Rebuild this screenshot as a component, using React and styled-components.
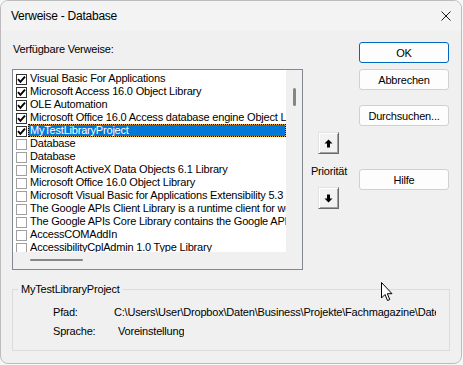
import React from 'react';
import styled, { createGlobalStyle } from 'styled-components';

const GlobalStyle = createGlobalStyle`
  html, body {
    margin: 0;
    padding: 0;
    background: #f7f7f7;
  }
  * {
    box-sizing: border-box;
  }
`;

const Window = styled.div`
  position: relative;
  width: 462px;
  height: 364px;
  border: 1px solid #bdbdbd;
  border-radius: 8px;
  background: #f0f0f0;
  overflow: hidden;
  font-family: "Liberation Sans", Arial, sans-serif;
  font-size: 11px;
  letter-spacing: -0.2px;
  color: #000;
`;

const TitleBar = styled.div`
  height: 30px;
  display: flex;
  align-items: center;
  justify-content: space-between;
  padding: 0 9px 0 10px;
  background: #f3f3f3;
  font-size: 12px;
  letter-spacing: -0.25px;
`;

const CloseIcon = styled.svg`
  width: 10px;
  height: 10px;
  margin-right: 1px;
`;

const Content = styled.div`
  padding: 11px 0 0 11px;
`;

const MainGrid = styled.div`
  display: grid;
  grid-template-columns: 291px 56px 90px;
`;

const LeftColumn = styled.div`
  display: flex;
  flex-direction: column;
`;

const Label = styled.div`
  height: 27px;
  padding-top: 1px;
  line-height: 13px;
  padding-left: 1px;
`;

const ListBox = styled.div`
  height: 201px;
  border: 1px solid #828790;
  background: #fff;
  display: grid;
  grid-template-columns: 1fr 16px;
  grid-template-rows: 1fr 17px;
`;

const Items = styled.div`
  overflow: hidden;
  padding: 2px 0 0 3px;
`;

const Row = styled.div`
  height: 13px;
  display: flex;
  align-items: center;
  white-space: nowrap;
`;

const Box = styled.span`
  flex: none;
  width: 11px;
  height: 11px;
  margin-top: 2px;
  border: 1px solid ${p => (p.$checked ? '#333' : '#a0a0a0')};
  background: #fff;
  display: flex;
  align-items: center;
  justify-content: center;
  margin-right: 1px;
`;

const ItemText = styled.span`
  flex: 1;
  height: 13px;
  line-height: 11px;
  padding: 0 1px;
  border: 1px solid transparent;
  color: ${p => (p.$selected ? '#fff' : '#000')};
  background: ${p =>
    p.$selected
      ? 'linear-gradient(#0078d7, #0078d7) padding-box, #f2a33a border-box'
      : 'transparent'};
  border-style: ${p => (p.$selected ? 'dotted' : 'solid')};
  border-color: ${p => (p.$selected ? '#000' : 'transparent')};
`;

const VScroll = styled.div`
  background: #f0f0f0;
  padding-top: 18px;
  display: flex;
  justify-content: center;
`;

const VThumb = styled.div`
  width: 3px;
  height: 18px;
  border-radius: 2px;
  background: #868686;
  margin-left: 1px;
`;

const HScroll = styled.div`
  background: #f0f0f0;
  padding: 7px 0 0 17px;
`;

const HThumb = styled.div`
  width: 53px;
  height: 2px;
  border-radius: 1px;
  background: #868686;
`;

const Corner = styled.div`
  background: #f0f0f0;
`;

const MiddleColumn = styled.div`
  display: flex;
  flex-direction: column;
  align-items: center;
  padding: 90px 6px 0 0;
`;

const ArrowButton = styled.div`
  width: 21px;
  height: 22px;
  display: flex;
  align-items: center;
  justify-content: center;
  background: #f2f2f2;
  border: 1px solid;
  border-color: #e3e3e3 #696969 #696969 #e3e3e3;
  box-shadow: inset 1px 1px #fff, inset -1px -1px #a0a0a0;
`;

const Priority = styled.div`
  line-height: 13px;
  margin: 11px 0 9px;
  padding-left: 2px;
`;

const RightColumn = styled.div`
  display: flex;
  flex-direction: column;
`;

const Button = styled.div`
  height: 21px;
  margin-top: ${p => p.$gap || 0}px;
  display: flex;
  align-items: center;
  justify-content: center;
  background: #fdfdfd;
  border: 1px solid ${p => (p.$primary ? '#0067c0' : '#d0d0d0')};
  border-radius: 3px;
`;

const Group = styled.fieldset`
  margin: 13px 0 0 0;
  padding: 6px 0 0 0;
  width: 438px;
  height: 68px;
  border: 1px solid #dcdcdc;
  min-width: 0;
`;

const Legend = styled.legend`
  margin-left: 5px;
  padding: 0 3px;
  line-height: 13px;
`;

const InfoRow = styled.div`
  display: flex;
  height: 19px;
  align-items: center;
  white-space: nowrap;
  overflow: hidden;
  padding-right: 13px;
`;

const InfoLabel = styled.span`
  flex: none;
  width: ${p => p.$w}px;
  padding-left: 40px;
`;

const InfoValue = styled.span`
  overflow: hidden;
`;

const Cursor = styled.svg`
  position: absolute;
  left: 380px;
  top: 281px;
  width: 12px;
  height: 20px;
`;

const Check = () => (
  <svg width="9" height="9" viewBox="0 0 9 9">
    <path d="M1 4.2 L3.4 6.8 L8 1.6" fill="none" stroke="#000" strokeWidth="1.9" />
  </svg>
);

const items = [
  { name: 'Visual Basic For Applications', checked: true },
  { name: 'Microsoft Access 16.0 Object Library', checked: true },
  { name: 'OLE Automation', checked: true },
  { name: 'Microsoft Office 16.0 Access database engine Object Library', checked: true },
  { name: 'MyTestLibraryProject', checked: true, selected: true },
  { name: 'Database' },
  { name: 'Database' },
  { name: 'Microsoft ActiveX Data Objects 6.1 Library' },
  { name: 'Microsoft Office 16.0 Object Library' },
  { name: 'Microsoft Visual Basic for Applications Extensibility 5.3' },
  { name: 'The Google APIs Client Library is a runtime client for working with Google services' },
  { name: 'The Google APIs Core Library contains the Google APIs' },
  { name: 'AccessCOMAddIn' },
  { name: 'AccessibilityCplAdmin 1.0 Type Library' },
];

const App = () => (
  <>
    <GlobalStyle />
    <Window>
      <TitleBar>
        <span>Verweise - Database</span>
        <CloseIcon viewBox="0 0 10 10">
          <path d="M0.5 0.5 L9.5 9.5 M9.5 0.5 L0.5 9.5" stroke="#1a1a1a" strokeWidth="1" />
        </CloseIcon>
      </TitleBar>
      <Content>
        <MainGrid>
          <LeftColumn>
            <Label>Verfügbare Verweise:</Label>
            <ListBox>
              <Items>
                {items.map((item, i) => (
                  <Row key={i}>
                    <Box $checked={item.checked}>{item.checked && <Check />}</Box>
                    <ItemText $selected={item.selected}>{item.name}</ItemText>
                  </Row>
                ))}
              </Items>
              <VScroll>
                <VThumb />
              </VScroll>
              <HScroll>
                <HThumb />
              </HScroll>
              <Corner />
            </ListBox>
          </LeftColumn>
          <MiddleColumn>
            <ArrowButton>
              <svg width="9" height="9" viewBox="0 0 9 9">
                <path d="M4.5 0.5 L8.5 4.5 L6 4.5 L6 8.5 L3 8.5 L3 4.5 L0.5 4.5 Z" fill="#000" />
              </svg>
            </ArrowButton>
            <Priority>Priorität</Priority>
            <ArrowButton>
              <svg width="9" height="9" viewBox="0 0 9 9">
                <path d="M4.5 8.5 L8.5 4.5 L6 4.5 L6 0.5 L3 0.5 L3 4.5 L0.5 4.5 Z" fill="#000" />
              </svg>
            </ArrowButton>
          </MiddleColumn>
          <RightColumn>
            <Button $primary>OK</Button>
            <Button $gap={6}>Abbrechen</Button>
            <Button $gap={15}>Durchsuchen...</Button>
            <Button $gap={43}>Hilfe</Button>
          </RightColumn>
        </MainGrid>
        <Group>
          <Legend>MyTestLibraryProject</Legend>
          <InfoRow>
            <InfoLabel $w={101}>Pfad:</InfoLabel>
            <InfoValue>C:\Users\User\Dropbox\Daten\Business\Projekte\Fachmagazine\Datenbanken\Database.accdb</InfoValue>
          </InfoRow>
          <InfoRow>
            <InfoLabel $w={105}>Sprache:</InfoLabel>
            <InfoValue>Voreinstellung</InfoValue>
          </InfoRow>
        </Group>
      </Content>
      <Cursor viewBox="0 0 12 20">
        <path d="M0.5 0.5 L0.5 16 L4 12.5 L6.5 18.5 L8.8 17.5 L6.3 11.7 L11 11.7 Z" fill="#fff" stroke="#000" strokeWidth="1" strokeLinejoin="round" />
      </Cursor>
    </Window>
  </>
);

export default App;
